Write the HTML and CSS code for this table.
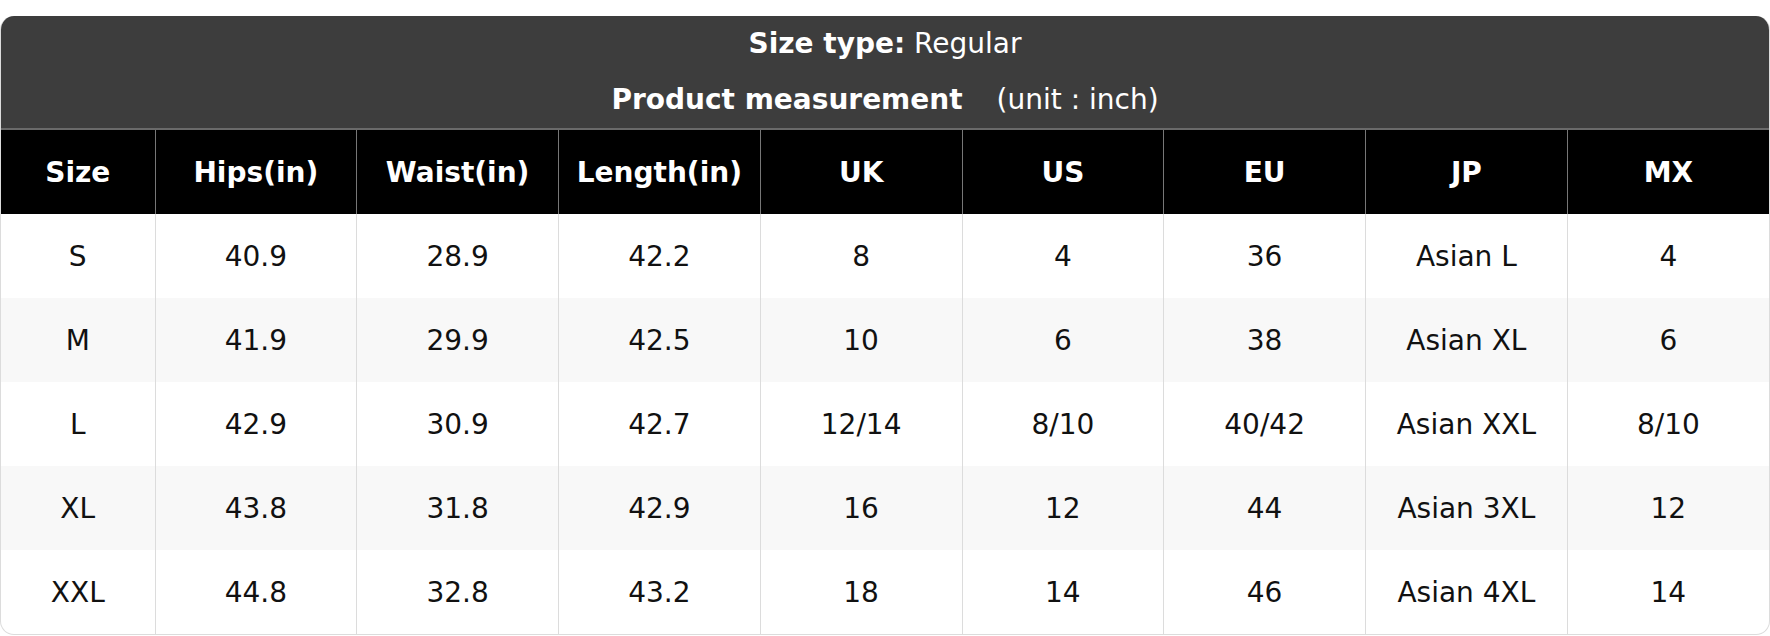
FILE: index.html
```html
<!DOCTYPE html>
<html lang="en">
<head>
<meta charset="utf-8">
<title>Size chart</title>
<link rel="stylesheet" href="styles.css">
</head>
<body>
<div class="chart">
  <div class="chart-head">
    <div class="head-line"><b>Size type:</b> Regular</div>
    <div class="head-line"><b>Product measurement</b><span class="unit">(unit : inch)</span></div>
  </div>
  <table class="size-table">
    <colgroup>
      <col class="col-first">
      <col><col><col><col><col><col><col><col>
    </colgroup>
    <thead>
      <tr>
        <th>Size</th><th>Hips(in)</th><th>Waist(in)</th><th>Length(in)</th><th>UK</th><th>US</th><th>EU</th><th>JP</th><th>MX</th>
      </tr>
    </thead>
    <tbody>
      <tr><td>S</td><td>40.9</td><td>28.9</td><td>42.2</td><td>8</td><td>4</td><td>36</td><td>Asian L</td><td>4</td></tr>
      <tr><td>M</td><td>41.9</td><td>29.9</td><td>42.5</td><td>10</td><td>6</td><td>38</td><td>Asian XL</td><td>6</td></tr>
      <tr><td>L</td><td>42.9</td><td>30.9</td><td>42.7</td><td>12/14</td><td>8/10</td><td>40/42</td><td>Asian XXL</td><td>8/10</td></tr>
      <tr><td>XL</td><td>43.8</td><td>31.8</td><td>42.9</td><td>16</td><td>12</td><td>44</td><td>Asian 3XL</td><td>12</td></tr>
      <tr><td>XXL</td><td>44.8</td><td>32.8</td><td>43.2</td><td>18</td><td>14</td><td>46</td><td>Asian 4XL</td><td>14</td></tr>
    </tbody>
  </table>
</div>
</body>
</html>
```

FILE: styles.css
```css
html, body {
  margin: 0;
  padding: 0;
  background: #ffffff;
}

body {
  font-family: "DejaVu Sans", "Noto Sans", sans-serif;
  color: #111111;
}

.chart {
  margin-top: 16px;
  width: 1770px;
  box-sizing: border-box;
  border: 1px solid #dcdcdc;
  border-top: none;
  border-radius: 14px;
  overflow: hidden;
}

.chart-head {
  background: #3d3d3d;
  color: #ffffff;
  text-align: center;
  font-size: 28px;
  border-bottom: 2px solid #6a6a6a;
}

.head-line {
  height: 56px;
  line-height: 56px;
}

.head-line b {
  font-weight: bold;
}

.unit {
  margin-left: 34px;
}

.size-table {
  width: 100%;
  border-collapse: collapse;
  table-layout: fixed;
  font-size: 28px;
}

.col-first {
  width: 154px;
}

.size-table th {
  background: #000000;
  color: #ffffff;
  font-weight: bold;
  height: 84px;
  padding: 0;
  text-align: center;
  border-left: 1px solid #777777;
}

.size-table td {
  height: 84px;
  padding: 0;
  text-align: center;
  border-left: 1px solid #dcdcdc;
}

.size-table th:first-child,
.size-table td:first-child {
  border-left: none;
}

.size-table tbody tr:nth-child(even) td {
  background: #f8f8f8;
}
```
